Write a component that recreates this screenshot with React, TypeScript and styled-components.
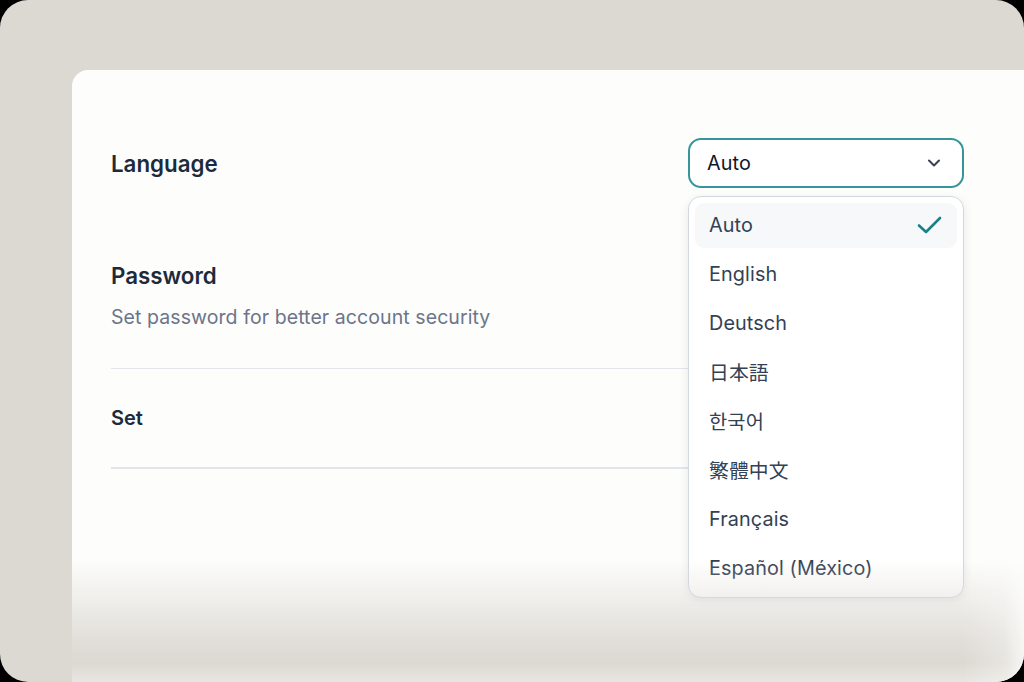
import styled, { createGlobalStyle } from "styled-components";
import { ChevronDown } from "lucide-react";

const GlobalStyle = createGlobalStyle`
  html, body {
    margin: 0;
    padding: 0;
    background: #000;
  }
  body {
    font-family: Inter, "Noto Sans CJK JP", sans-serif;
  }
`;

const Screen = styled.div`
  position: relative;
  width: 1024px;
  height: 682px;
  box-sizing: border-box;
  padding: 70px 0 0 72px;
  overflow: hidden;
  border-radius: 28px;
  background: #dcd9d3;
`;

const Card = styled.main`
  height: 100%;
  box-sizing: border-box;
  padding: 68px 60px 0 39px;
  border-radius: 16px 0 0 0;
  background: #fdfdfb;
`;

const LanguageRow = styled.section`
  display: flex;
  align-items: center;
  justify-content: space-between;
  height: 50px;
`;

const RowTitle = styled.h2`
  margin: 0;
  font-size: 22.3px;
  font-weight: 600;
  line-height: 28px;
  color: #1d2a3c;
`;

const LanguageTitle = styled(RowTitle)`
  padding-top: 2px;
`;

const SelectBox = styled.div`
  position: relative;
  width: 276px;
  height: 50px;
`;

const SelectButton = styled.button`
  display: flex;
  align-items: center;
  justify-content: space-between;
  width: 100%;
  height: 100%;
  box-sizing: border-box;
  padding: 0 18px 0 17px;
  border: 2px solid #35959b;
  border-radius: 13px;
  background: #fff;
  color: #0f172a;
  font: 400 19.8px Inter, sans-serif;
  letter-spacing: 0.1px;
  svg {
    color: #374151;
  }
`;

const Menu = styled.ul`
  position: absolute;
  z-index: 2;
  top: 58px;
  left: 0;
  width: 276px;
  box-sizing: border-box;
  display: flex;
  flex-direction: column;
  gap: 4px;
  margin: 0;
  padding: 6px;
  list-style: none;
  border: 1px solid #d3d8e0;
  border-radius: 13px;
  background: #fff;
  box-shadow: 0 3px 8px rgba(100, 116, 139, 0.16);
`;

const MenuItem = styled.li<{ $active?: boolean }>`
  display: flex;
  align-items: center;
  justify-content: space-between;
  height: 45px;
  box-sizing: border-box;
  padding: 0 14px 2px;
  border-radius: 9px;
  background: ${(p) => (p.$active ? "#f7f8fa" : "transparent")};
  color: #334155;
  font-size: 19.8px;
  font-weight: 400;
  letter-spacing: 0.12px;
`;

const PasswordSection = styled.section`
  margin-top: 74px;
  border-bottom: 1px solid #e2e5e9;
  padding-bottom: 38px;
`;

const Hint = styled.p`
  margin: 14px 0 0;
  font-size: 19.5px;
  line-height: 26px;
  color: #6b7589;
  letter-spacing: 0.08px;
`;

const SetRow = styled.section`
  display: flex;
  align-items: center;
  height: 98px;
  border-bottom: 2px solid #e2e5ec;
`;

const SetLabel = styled.span`
  font-size: 20px;
  font-weight: 600;
  color: #1d2a3c;
`;

const BottomFade = styled.div`
  position: absolute;
  z-index: 3;
  left: 72px;
  right: 0;
  bottom: 0;
  height: 122px;
  pointer-events: none;
  background: linear-gradient(
    to bottom,
    rgba(220, 217, 211, 0) 0%,
    rgba(220, 217, 211, 0.42) 33%,
    rgba(220, 217, 211, 0.86) 66%,
    #dcd9d3 84%,
    #e8e6e2 100%
  );
  mask-image: linear-gradient(to right, #000 calc(100% - 60px), rgba(0, 0, 0, 0.7) calc(100% - 20px), rgba(0, 0, 0, 0.2) 100%);
`;

const languages = ["Auto", "English", "Deutsch", "日本語", "한국어", "繁體中文", "Français", "Español (México)"];

function App() {
  return (
    <>
      <GlobalStyle />
      <Screen>
        <Card>
          <LanguageRow>
            <LanguageTitle>Language</LanguageTitle>
            <SelectBox>
              <SelectButton>
                Auto
                <ChevronDown size={20} strokeWidth={2.4} />
              </SelectButton>
              <Menu>
                {languages.map((name, i) => (
                  <MenuItem key={name} $active={i === 0}>
                    {name}
                    {i === 0 && (
                      <svg width="26" height="20" viewBox="0 0 26 20" fill="none">
                        <path d="M2 10.5 L9 17 L23 3" stroke="#1a8089" strokeWidth="2.6" strokeLinecap="round" strokeLinejoin="round" />
                      </svg>
                    )}
                  </MenuItem>
                ))}
              </Menu>
            </SelectBox>
          </LanguageRow>
          <PasswordSection>
            <RowTitle>Password</RowTitle>
            <Hint>Set password for better account security</Hint>
          </PasswordSection>
          <SetRow>
            <SetLabel>Set</SetLabel>
          </SetRow>
        </Card>
        <BottomFade />
      </Screen>
    </>
  );
}

export default App;
